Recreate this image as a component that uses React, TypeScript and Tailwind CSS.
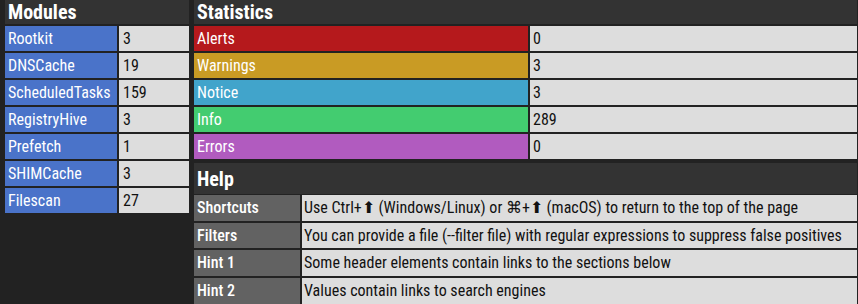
const modules: [string, number][] = [
  ['Rootkit', 3],
  ['DNSCache', 19],
  ['ScheduledTasks', 159],
  ['RegistryHive', 3],
  ['Prefetch', 1],
  ['SHIMCache', 3],
  ['Filescan', 27],
];

const stats = [
  { label: 'Alerts', value: 0, bg: 'bg-[#b5191c]' },
  { label: 'Warnings', value: 3, bg: 'bg-[#c99b24]' },
  { label: 'Notice', value: 3, bg: 'bg-[#41a4cb]' },
  { label: 'Info', value: 289, bg: 'bg-[#43cc70]' },
  { label: 'Errors', value: 0, bg: 'bg-[#b15bbf]' },
];

const help: [string, string][] = [
  ['Shortcuts', 'Use Ctrl+⬆ (Windows/Linux) or ⌘+⬆ (macOS) to return to the top of the page'],
  ['Filters', 'You can provide a file (--filter file) with regular expressions to suppress false positives'],
  ['Hint 1', 'Some header elements contain links to the sections below'],
  ['Hint 2', 'Values contain links to search engines'],
];

function Header({ title, tall }: { title: string; tall?: boolean }) {
  return (
    <div
      className={`flex items-center bg-[#333333] pl-[3px] text-[20px] font-bold text-white ${
        tall ? 'h-[31px]' : 'h-[24px] pb-[1px]'
      }`}
    >
      {title}
    </div>
  );
}

export default function App() {
  return (
    <div className="flex h-[304px] w-[858px] gap-[5px] overflow-hidden bg-[#222222] pl-[5px] pr-[1px] font-['Roboto_Condensed',Roboto,sans-serif] text-[16px] leading-none">
      {/* modules */}
      <div className="flex w-[184px] flex-col gap-[2px]">
        <Header title="Modules" />
        {modules.map(([name, count]) => (
          <div key={name} className="flex h-[25px] gap-[2px]">
            <div className="flex w-[112px] items-center bg-[#4a73c9] pl-[3px] text-white">{name}</div>
            <div className="flex flex-1 items-center bg-[#dddddd] pl-[4px] text-[#111111]">{count}</div>
          </div>
        ))}
      </div>

      <div className="flex flex-1 flex-col">
        {/* statistics */}
        <div className="flex flex-col gap-[2px]">
          <Header title="Statistics" />
          {stats.map((s) => (
            <div key={s.label} className="flex h-[25px] gap-[2px]">
              <div className={`flex w-[334px] items-center pl-[3px] text-white ${s.bg}`}>{s.label}</div>
              <div className="flex flex-1 items-center bg-[#dddddd] pl-[3px] text-[#111111]">{s.value}</div>
            </div>
          ))}
        </div>

        {/* help */}
        <div className="mt-[4px] flex flex-col gap-[2px]">
          <Header title="Help" tall />
          {help.map(([k, v], i) => (
            <div key={k} className={`flex h-[25.7px] gap-[2px] ${i === 0 ? '-mt-[1px]' : ''}`}>
              <div className="flex w-[106px] items-center bg-[#626262] pl-[3px] font-medium text-white">{k}</div>
              <div className="flex flex-1 items-center bg-[#dddddd] pl-[2px] text-[#111111]">{v}</div>
            </div>
          ))}
        </div>
      </div>
    </div>
  );
}
